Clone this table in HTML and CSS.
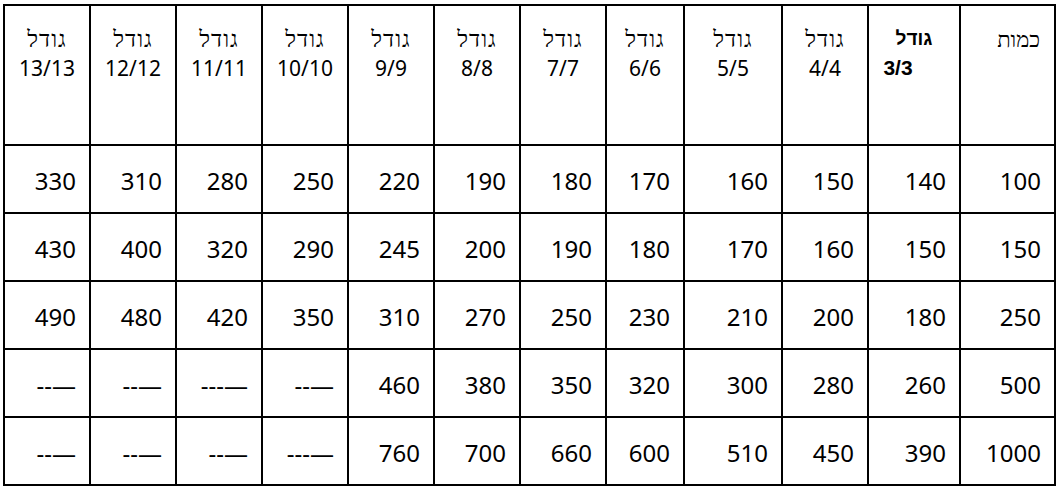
FILE: index.html
```html
<!DOCTYPE html>
<html lang="he" dir="rtl">
<head>
<meta charset="utf-8">
<link rel="stylesheet" href="styles.css">
</head>
<body>
<table class="price-table">
  <colgroup>
    <col class="w-qty">
    <col class="w-3">
    <col class="w-4">
    <col class="w-5">
    <col class="w-6">
    <col class="w-std">
    <col class="w-std">
    <col class="w-std">
    <col class="w-std">
    <col class="w-std">
    <col class="w-std">
    <col class="w-std">
  </colgroup>
  <thead>
    <tr>
      <th class="qty-head">כמות</th>
      <th class="bold-head"><span>גודל</span><br><span class="shift">3/3</span></th>
      <th><span class="lbl">גודל</span><br>4/4</th>
      <th><span class="lbl">גודל</span><br>5/5</th>
      <th><span class="lbl">גודל</span><br>6/6</th>
      <th><span class="lbl">גודל</span><br>7/7</th>
      <th><span class="lbl">גודל</span><br>8/8</th>
      <th><span class="lbl">גודל</span><br>9/9</th>
      <th><span class="lbl">גודל</span><br>10/10</th>
      <th><span class="lbl">גודל</span><br>11/11</th>
      <th><span class="lbl">גודל</span><br>12/12</th>
      <th><span class="lbl">גודל</span><br>13/13</th>
    </tr>
  </thead>
  <tbody>
    <tr><td>100</td><td>140</td><td>150</td><td>160</td><td>170</td><td>180</td><td>190</td><td>220</td><td>250</td><td>280</td><td>310</td><td>330</td></tr>
    <tr><td>150</td><td>150</td><td>160</td><td>170</td><td>180</td><td>190</td><td>200</td><td>245</td><td>290</td><td>320</td><td>400</td><td>430</td></tr>
    <tr><td>250</td><td>180</td><td>200</td><td>210</td><td>230</td><td>250</td><td>270</td><td>310</td><td>350</td><td>420</td><td>480</td><td>490</td></tr>
    <tr><td>500</td><td>260</td><td>280</td><td>300</td><td>320</td><td>350</td><td>380</td><td>460</td><td class="dash">--—</td><td class="dash">---—</td><td class="dash">--—</td><td class="dash">--—</td></tr>
    <tr><td>1000</td><td>390</td><td>450</td><td>510</td><td>600</td><td>660</td><td>700</td><td>760</td><td class="dash">---—</td><td class="dash">--—</td><td class="dash">--—</td><td class="dash">--—</td></tr>
  </tbody>
</table>
</body>
</html>
```

FILE: styles.css
```css
html, body {
  margin: 0;
  padding: 0;
  background: #fff;
}
body {
  padding: 4px;
  font-family: "Noto Sans";
  color: #000;
}
.price-table {
  border-collapse: collapse;
  table-layout: fixed;
  width: 1052px;
}
.w-qty { width: 95px; }
.w-3 { width: 92px; }
.w-4 { width: 86px; }
.w-5 { width: 98px; }
.w-6 { width: 78px; }
.w-std { width: 86px; }

.price-table th,
.price-table td {
  border: 2px solid #000;
}
.price-table th {
  height: 140px;
  box-sizing: border-box;
  vertical-align: top;
  text-align: center;
  font-weight: normal;
  font-size: 21px;
  line-height: 29px;
  padding: 18px 4px 0;
}
.lbl {
  font-size: 23px;
  letter-spacing: 1px;
}
.price-table th.qty-head {
  text-align: right;
  padding-right: 14px;
  font-size: 22px;
}
.price-table th.bold-head {
  font-family: "Liberation Sans", Arial, sans-serif;
  font-weight: bold;
  font-size: 19px;
  line-height: 29px;
}
.shift {
  font-size: 21px;
  margin-right: 32px;
}
.price-table td {
  height: 68px;
  box-sizing: border-box;
  vertical-align: middle;
  text-align: right;
  font-size: 24px;
  padding: 2px 13px 0 4px;
}
.price-table td.dash {
  direction: ltr;
  unicode-bidi: isolate;
}
```
